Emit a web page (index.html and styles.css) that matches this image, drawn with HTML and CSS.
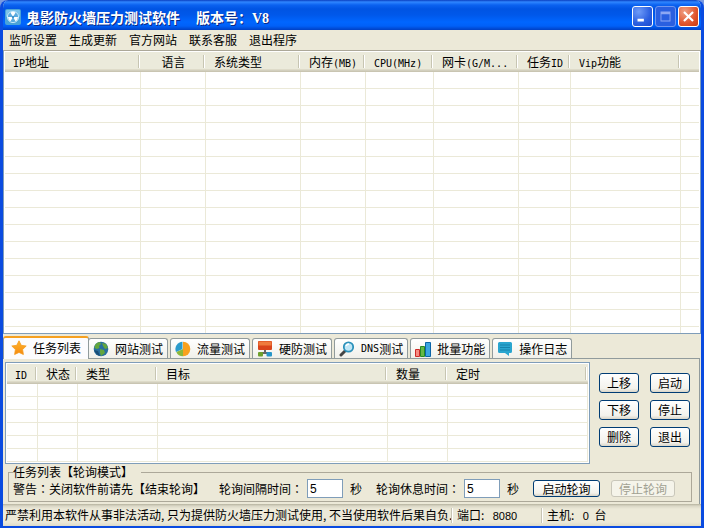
FILE: index.html
```html
<!DOCTYPE html>
<html lang="zh-CN">
<head>
<meta charset="utf-8">
<title>鬼影防火墙压力测试软件</title>
<link rel="stylesheet" href="styles.css">
</head>
<body>
<div class="window">
  <header class="titlebar">
    <svg class="app-icon" viewBox="0 0 16 16" aria-hidden="true">
      <rect width="16" height="16" rx="2" fill="#4aa3d8"/>
      <rect x="1" y="1" width="14" height="7" rx="1" fill="#7cc3ea"/>
      <circle cx="8" cy="8" r="5.6" fill="#5aaade" stroke="#c4e8fa"/>
      <path d="M8 8L5.4 3.6A5 5 0 0 1 10.600 3.6ZM8 8H13A5 5 0 0 1 10.500 12.300ZM8 8H3A5 5 0 0 0 5.500 12.300Z" fill="#fff"/>
      <circle cx="8" cy="8" r="1.200" fill="#3f93cc"/>
    </svg>
    <h1 class="title"><span>鬼影防火墙压力测试软件</span><span>版本号：<span class="latin-title">V8</span></span></h1>
    <div class="window-controls">
      <button class="control" type="button" aria-label="最小化"><svg viewBox="0 0 21 21"><path d="M5 13h7v3H5z" fill="#fff"/></svg></button>
      <button class="control control-max" type="button" aria-label="最大化" disabled><svg viewBox="0 0 21 21"><path d="M5 5h11v11H5zM6 8v7h9V8z" fill="#8da7f3" fill-rule="evenodd"/></svg></button>
      <button class="control control-close" type="button" aria-label="关闭"><svg viewBox="0 0 21 21"><path d="M5.500 5.500l10 10M15.500 5.500l-10 10" stroke="#fff" stroke-width="2.400"/></svg></button>
    </div>
  </header>

  <nav class="menu">
    <a href="#">监听设置</a>
    <a href="#">生成更新</a>
    <a href="#">官方网站</a>
    <a href="#">联系客服</a>
    <a href="#">退出程序</a>
  </nav>

  <main class="content">
    <div class="hosts">
      <table class="grid hosts-grid">
        <colgroup><col class="w-ip"><col class="w-lang"><col class="w-os"><col class="w-mem"><col class="w-cpu"><col class="w-net"><col class="w-task"><col class="w-vip"><col></colgroup>
        <thead>
          <tr><th><span class="latin">IP</span>地址</th><th class="center">语言</th><th>系统类型</th><th>内存<span class="latin">(MB)</span></th><th><span class="latin">CPU(MHz)</span></th><th>网卡<span class="latin">(G/M...</span></th><th>任务<span class="latin">ID</span></th><th><span class="latin">Vip</span>功能</th><th class="rest"></th></tr>
        </thead>
        <tbody>
          <tr><td></td><td></td><td></td><td></td><td></td><td></td><td></td><td></td><td></td></tr>
          <tr><td></td><td></td><td></td><td></td><td></td><td></td><td></td><td></td><td></td></tr>
          <tr><td></td><td></td><td></td><td></td><td></td><td></td><td></td><td></td><td></td></tr>
          <tr><td></td><td></td><td></td><td></td><td></td><td></td><td></td><td></td><td></td></tr>
          <tr><td></td><td></td><td></td><td></td><td></td><td></td><td></td><td></td><td></td></tr>
          <tr><td></td><td></td><td></td><td></td><td></td><td></td><td></td><td></td><td></td></tr>
          <tr><td></td><td></td><td></td><td></td><td></td><td></td><td></td><td></td><td></td></tr>
          <tr><td></td><td></td><td></td><td></td><td></td><td></td><td></td><td></td><td></td></tr>
          <tr><td></td><td></td><td></td><td></td><td></td><td></td><td></td><td></td><td></td></tr>
          <tr><td></td><td></td><td></td><td></td><td></td><td></td><td></td><td></td><td></td></tr>
          <tr><td></td><td></td><td></td><td></td><td></td><td></td><td></td><td></td><td></td></tr>
          <tr><td></td><td></td><td></td><td></td><td></td><td></td><td></td><td></td><td></td></tr>
          <tr><td></td><td></td><td></td><td></td><td></td><td></td><td></td><td></td><td></td></tr>
          <tr><td></td><td></td><td></td><td></td><td></td><td></td><td></td><td></td><td></td></tr>
          <tr><td></td><td></td><td></td><td></td><td></td><td></td><td></td><td></td><td></td></tr>
          <tr><td></td><td></td><td></td><td></td><td></td><td></td><td></td><td></td><td></td></tr>
        </tbody>
      </table>
    </div>

    <div class="tabs" role="tablist">
      <button class="tab tab-active" type="button" role="tab" aria-selected="true">
        <svg viewBox="0 0 16 16"><defs><linearGradient id="star" x2="0" y2="1"><stop stop-color="#ffb52e"/><stop offset="1" stop-color="#f58a10"/></linearGradient></defs><path d="M8 .8l2.200 4.500 5 .700-3.600 3.500.800 5L8 12.400l-4.400 2.100.8-5L.8 6l5-.7z" fill="url(#star)" stroke="#f49a1e" stroke-width=".8" stroke-linejoin="round"/></svg>
        任务列表</button>
      <button class="tab" type="button" role="tab">
        <svg viewBox="0 0 16 16"><circle cx="8" cy="8" r="7.300" fill="#286f9e"/><path d="M2 4Q4 1 7 1L8 3 6 5 6.500 7 4 8 1.500 7zM9 2l4 1 2 4-3 1-2-3zM7 8l4 1 1 3-4 3-1-3z" fill="#63a63c"/><path d="M1 9q2 5 6 6l-2-5z" fill="#184d78"/></svg>
        网站测试</button>
      <button class="tab" type="button" role="tab">
        <svg viewBox="0 0 16 16"><path d="M8 .7A7.300 7.300 0 0 1 8 15.300z" fill="#f9a11d"/><path d="M8 15.300A7.300 7.300 0 0 1 1.300 11L8 8z" fill="#8bb83b"/><path d="M7.500.7V8L1 11A7.400 7.400 0 0 1 7.500.7z" fill="#2c9bcb"/></svg>
        流量测试</button>
      <button class="tab" type="button" role="tab">
        <svg viewBox="0 0 16 16"><path d="M7 8h2v3h3v2H4v-2h3z" fill="#666"/><rect x="1" y="0" width="14" height="9" rx="1" fill="#d9441b"/><path d="M1.500.5h13v4h-13z" fill="#ef7b3d"/><rect x="1" y="11" width="5" height="4.500" rx="1" fill="#6ea02c"/><rect x="9.500" y="11" width="5.500" height="4.500" rx="1" fill="#2596c9"/></svg>
        硬防测试</button>
      <button class="tab" type="button" role="tab">
        <svg viewBox="0 0 16 16"><path d="M2 14l4-4" stroke="#444" stroke-width="3" stroke-linecap="round"/><circle cx="9.500" cy="6" r="4.700" fill="#bfe6f6" stroke="#2b91ba" stroke-width="1.800"/><path d="M7 5q1-2 3-2" stroke="#fff" fill="none" stroke-width="1.300"/></svg>
        <span class="latin">DNS</span>测试</button>
      <button class="tab" type="button" role="tab">
        <svg viewBox="0 0 16 16"><path d="M.5 8.500h4v7h-4z" fill="#f68b82" stroke="#cd2a27"/><path d="M5.500 5.500h4v10h-4z" fill="#65b944" stroke="#288b22"/><path d="M10.500 1.500h5v14h-5z" fill="#3ba6df" stroke="#0b64a8"/></svg>
        批量功能</button>
      <button class="tab" type="button" role="tab">
        <svg viewBox="0 0 16 16"><path d="M2.500 1h11Q15 1 15 2.500v8Q15 12 13.500 12H12v3L8 12H2.500Q1 12 1 10.500v-8Q1 1 2.500 1z" fill="#29a5cf"/><path d="M3 4h10M3 6.500h10M3 9h10" stroke="#1683ad"/></svg>
        操作日志</button>
    </div>

    <section class="panel">
      <div class="task-area">
        <div class="tasks">
          <table class="grid tasks-grid">
            <colgroup><col class="w-id"><col class="w-state"><col class="w-kind"><col><col class="w-count"><col class="w-timer"></colgroup>
            <thead><tr><th><span class="latin">ID</span></th><th>状态</th><th>类型</th><th>目标</th><th>数量</th><th>定时</th></tr></thead>
            <tbody>
              <tr><td></td><td></td><td></td><td></td><td></td><td></td></tr>
              <tr><td></td><td></td><td></td><td></td><td></td><td></td></tr>
              <tr><td></td><td></td><td></td><td></td><td></td><td></td></tr>
              <tr><td></td><td></td><td></td><td></td><td></td><td></td></tr>
              <tr><td></td><td></td><td></td><td></td><td></td><td></td></tr>
              <tr><td></td><td></td><td></td><td></td><td></td><td></td></tr>
            </tbody>
          </table>
        </div>
        <div class="task-buttons">
          <button class="btn" type="button">上移</button>
          <button class="btn" type="button">启动</button>
          <button class="btn" type="button">下移</button>
          <button class="btn" type="button">停止</button>
          <button class="btn" type="button">删除</button>
          <button class="btn" type="button">退出</button>
        </div>
      </div>

      <fieldset class="polling">
        <legend>任务列表【轮询模式】</legend>
        <div class="polling-row">
          <span class="warning">警告<span class="colon" lang="zh-TW">：</span>关闭软件前请先【结束轮询】</span>
          <label for="interval">轮询间隔时间<span class="colon" lang="zh-TW">：</span></label>
          <input id="interval" type="text" value="5">
          <span class="unit">秒</span>
          <label for="rest">轮询休息时间<span class="colon" lang="zh-TW">：</span></label>
          <input id="rest" type="text" value="5">
          <span class="unit">秒</span>
          <button class="btn btn-wide" type="button">启动轮询</button>
          <button class="btn btn-wide" type="button" disabled>停止轮询</button>
        </div>
      </fieldset>
    </section>
  </main>

  <footer class="status">
    <span class="notice">严禁利用本软件从事非法活动<span class="comma">,</span>只为提供防火墙压力测试使用<span class="comma">,</span>不当使用软件后果自负.</span>
    <span class="port">端口<span class="comma">:</span> <span class="digits">8080</span></span>
    <span class="host">主机<span class="comma">:</span> <span class="digits">0</span> 台</span>
  </footer>
</div>
</body>
</html>
```
FILE: styles.css
```css
* {
  box-sizing: border-box;
}

body {
  margin: 0;
  background: #7b9be0;
  color: #000;
  font: 12px/14px "Noto Sans CJK SC", sans-serif;
}

button,
input {
  margin: 0;
  color: inherit;
  font: inherit;
}

.window {
  display: flex;
  flex-direction: column;
  min-height: 100vh;
  min-width: 700px;
  border: solid #0a4be0;
  border-width: 0 3px 2px;
  border-radius: 8px 8px 0 0;
  background: #ece9d8;
  overflow: hidden;
}

.latin {
  font-family: "DejaVu Sans Mono", monospace;
  font-size: 10px;
  line-height: 0;
}

.latin-title {
  font-family: "Liberation Serif", serif;
  line-height: 0;
}

.colon {
  font-family: "Noto Sans CJK TC", sans-serif;
}

.comma {
  display: inline-block;
  width: 6px;
}

.digits {
  margin: 0 3px;
  font-family: "Liberation Sans", sans-serif;
  font-size: 11px;
}

/* Title bar */

.titlebar {
  display: flex;
  align-items: center;
  height: 30px;
  padding: 3px 2px 0;
  background: linear-gradient(#0a3fc0 0, #2f86ff 2px, #0b62f0 5px, #0054e3 9px, #0058ea 15px, #0066ff 22px, #0060f8 26px, #0040c4 30px);
  color: #fff;
}

.app-icon {
  width: 16px;
  height: 16px;
}

.title {
  display: flex;
  flex: 1;
  gap: 16px;
  margin: 0 0 0 5px;
  font-size: 14px;
  line-height: 20px;
  font-weight: bold;
  text-shadow: 1px 1px #0a2a86;
  white-space: nowrap;
}

.window-controls {
  display: flex;
  gap: 2px;
}

.control {
  width: 21px;
  height: 21px;
  padding: 0;
  border: 1px solid #fff;
  border-radius: 3px;
  background: radial-gradient(circle at 30% 25%, #6f9cf8, #2b5fe0 60%, #1c49cc);
}

.control svg {
  display: block;
  width: 19px;
  height: 19px;
}

.control-max {
  border-color: #6f96f0;
  background: #2a5fe0;
}

.control-close {
  background: radial-gradient(circle at 30% 25%, #f0a084, #e0552c 60%, #c83a10);
}

/* Menu */

.menu {
  display: flex;
  gap: 12px;
  height: 20px;
  padding: 3px 6px;
}

.menu a {
  color: inherit;
  text-decoration: none;
}

/* Lists */

.content {
  display: flex;
  flex: 1;
  flex-direction: column;
}

.hosts {
  flex: 1 1 0;
  min-height: 200px;
  padding: 1px 1px 0;
  border: 1px solid #7f9db9;
  border-top-color: #aca899;
  background: #fff;
  overflow: hidden;
}

.grid {
  width: 100%;
  table-layout: fixed;
  border-spacing: 0;
}

.grid th {
  height: 20px;
  padding: 0 0 1px 8px;
  background:
    linear-gradient(#c7c5b2, #c7c5b2) right 2px top 3px / 1px 13px no-repeat,
    linear-gradient(#fff, #fff) right 1px top 3px / 1px 13px no-repeat,
    linear-gradient(#ebeadb 0 17px, #dedbc9 17px 18px, #d2cfbe 18px 19px, #c9c5b2 19px 20px);
  font-weight: normal;
  text-align: left;
  white-space: nowrap;
}

.grid th.center {
  padding-left: 0;
  text-align: center;
}

.grid th.rest {
  background: linear-gradient(#ebeadb 0 17px, #dedbc9 17px 18px, #d2cfbe 18px 19px, #c9c5b2 19px 20px);
}

.grid td {
  padding: 0;
  border: solid #ebe9d8;
  border-width: 0 1px 1px 0;
}

.hosts-grid td {
  height: 17px;
}

.hosts-grid td:last-child {
  border-right: 0;
}

.tasks-grid td {
  height: 13px;
}

.w-ip { width: 136px; }
.w-lang { width: 65px; }
.w-os { width: 95px; }
.w-mem { width: 65px; }
.w-cpu { width: 68px; }
.w-net { width: 85px; }
.w-task { width: 52px; }
.w-vip { width: 110px; }
.w-id { width: 31px; }
.w-state { width: 40px; }
.w-kind { width: 80px; }
.w-count { width: 60px; }
.w-timer { width: 140px; }

/* Tabs */

.tabs {
  display: flex;
  align-items: flex-end;
  gap: 2px;
  height: 23px;
  margin-top: 1px;
}

.tab {
  display: flex;
  align-items: center;
  height: 20px;
  padding: 1px 4px 0;
  border: 1px solid #919b9c;
  border-bottom: 0;
  border-radius: 3px 3px 0 0;
  background: linear-gradient(#fff, #f0f0ea);
  white-space: nowrap;
}

.tab svg {
  width: 16px;
  height: 16px;
  margin-right: 6px;
}

.tab-active {
  z-index: 1;
  height: 23px;
  margin: 0 -3px -1px 0;
  padding: 0 7px 2px;
  border-top: 2px solid #f5a020;
  background: #fcfcfe;
}

/* Panel */

.panel {
  margin-right: 1px;
  padding: 3px 7px 2px 2px;
  border: solid #919b9c;
  border-width: 1px 1px 0 0;
}

.task-area {
  display: flex;
  gap: 9px;
}

.tasks {
  flex: 1;
  padding: 1px;
  border: 1px solid #7f9db9;
  background: #fff;
}

.task-buttons {
  display: grid;
  grid-template-columns: 40px 40px;
  grid-auto-rows: 20px;
  gap: 7px 11px;
  padding: 11px 2px 0 0;
}

.btn {
  padding: 0;
  border: 1px solid #003c74;
  border-radius: 3px;
  background: linear-gradient(#fff, #f3f2ec 80%, #d9d5c8);
  line-height: 14px;
  white-space: nowrap;
}

.btn:disabled {
  border-color: #c9c7ba;
  background: #f5f4ea;
  color: #a1a192;
}

.polling {
  min-width: 0;
  margin: 1px 0 0 3px;
  padding: 0 0 3px 4px;
  border: 1px solid #aca899;
}

.polling legend {
  padding: 0 8px 0 0;
  line-height: 14px;
}

.polling-row {
  display: flex;
  align-items: center;
  height: 19px;
  white-space: nowrap;
}

.warning {
  flex: 0 1 206px;
}

.polling input {
  width: 36px;
  height: 19px;
  margin: 0 7px 0 4px;
  padding: 0 2px;
  border: 1px solid #7f9db9;
  background: #fff;
  font-family: "Liberation Sans", sans-serif;
}

.unit {
  margin-right: 14px;
}

.btn-wide {
  width: 67px;
  height: 17px;
}

.btn-wide + .btn-wide {
  width: 64px;
  margin-left: 11px;
}

/* Status bar */

.status {
  display: flex;
  align-items: center;
  height: 22px;
  padding-left: 2px;
  background: linear-gradient(#b5b29f, #dad7c6 2px, #ece9d8 5px, #ece9d8 18px, #dedbc8);
  white-space: nowrap;
}

.notice {
  width: 446px;
}

.port,
.host {
  padding-left: 5px;
  border-left: 1px solid #c7c4b3;
  box-shadow: inset 1px 0 #fff;
}

.port {
  width: 90px;
}

.host {
  flex: 1;
}
```
